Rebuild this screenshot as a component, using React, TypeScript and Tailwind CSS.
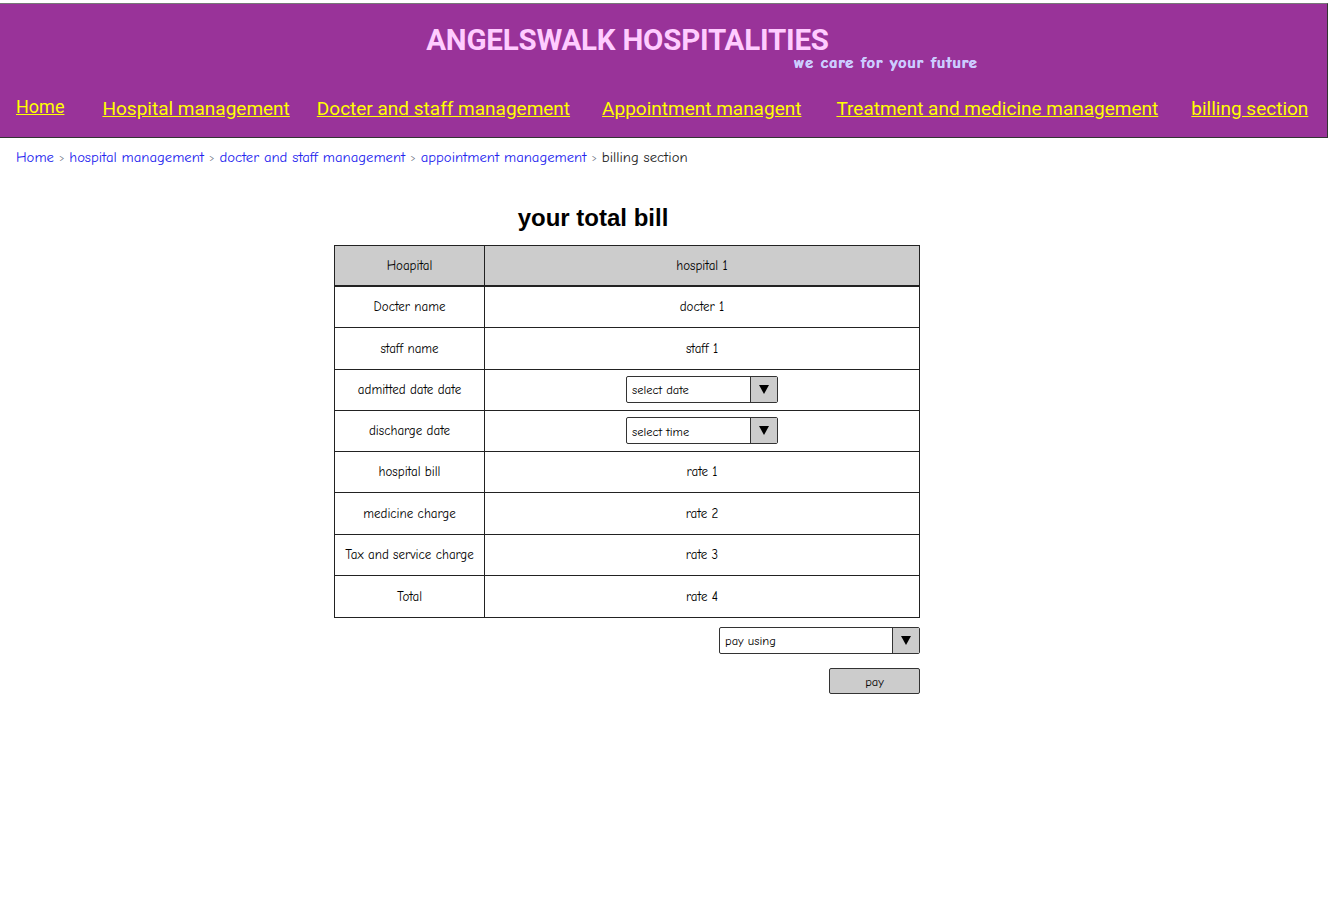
import React from "react";

const hand = { fontFamily: '"Comic Neue", "Comic Sans MS", "Noto Sans", "DejaVu Sans", sans-serif' };
const roboto = { fontFamily: 'Roboto, "Liberation Sans", sans-serif' };

function Select({ label, w }: { label: string; w: string }) {
  return (
    <div className={`flex h-[27px] ${w} border border-[#333] rounded-[2px] bg-white text-[12.5px] text-black`}>
      <div className="flex-1 flex items-center pl-[5px] pt-[2px]">{label}</div>
      <div className="w-[27px] border-l border-[#333] bg-[#cccccc] flex items-center justify-center">
        <svg width="10" height="9" viewBox="0 0 10 9"><path d="M0 0 H10 L5 9 Z" fill="#000" /></svg>
      </div>
    </div>
  );
}

const rows: { k: string; v: React.ReactNode }[] = [
  { k: "Docter name", v: "docter 1" },
  { k: "staff name", v: "staff 1" },
  { k: "admitted date date", v: <Select label="select date" w="w-[152px]" /> },
  { k: "discharge date", v: <Select label="select time" w="w-[152px]" /> },
  { k: "hospital bill", v: "rate 1" },
  { k: "medicine charge", v: "rate 2" },
  { k: "Tax and service charge", v: "rate 3" },
  { k: "Total", v: "rate 4" },
];

export default function App() {
  return (
    <div className="w-[1332px] min-h-[897px] bg-white pt-[3px]">
      <div className="w-[1328px] h-[135px] bg-[#993399] border border-[#333] border-l-0 border-t-[#777] flex flex-col">
        <div className="flex justify-center pt-[19px]">
          <div style={roboto} className="text-[29.5px] leading-[34px] font-bold text-[#ffccff] tracking-[-0.2px] ml-[-72px]">
            ANGELSWALK HOSPITALITIES
          </div>
        </div>
        <div style={hand} className="pl-[794px] text-[16px] leading-[16px] font-bold text-[#ccccff] tracking-[1px] mt-[-2px] [text-shadow:0.6px_0_0_#ccccff,0_0.4px_0_#ccccff]">
          we care for your future
        </div>
        <div style={roboto} className="flex items-end text-[19px] leading-[22px] text-[#ffff00] mt-[25px] pl-[16px]">
          <a className="underline mb-[2px] text-[18px]">Home</a>
          <a className="underline ml-[38px]">Hospital management</a>
          <a className="underline ml-[27px]">Docter and staff management</a>
          <a className="underline ml-[32px]">Appointment managent</a>
          <a className="underline ml-[35px]">Treatment and medicine management</a>
          <a className="underline ml-[33px]">billing section</a>
        </div>
      </div>

      <div style={hand} className="pl-[16px] mt-[11px] text-[14.7px] leading-[18px] flex items-center gap-[5px]">
        <span className="text-[#2222ee]">Home</span>
        <span className="text-gray-500 text-[10px]">&gt;</span>
        <span className="text-[#2222ee]">hospital management</span>
        <span className="text-gray-500 text-[10px]">&gt;</span>
        <span className="text-[#2222ee]">docter and staff management</span>
        <span className="text-gray-500 text-[10px]">&gt;</span>
        <span className="text-[#2222ee]">appointment management</span>
        <span className="text-gray-500 text-[10px]">&gt;</span>
        <span className="text-[#222]">billing section</span>
      </div>

      <div className="flex flex-col items-center">
        <div style={{ fontFamily: '"Liberation Sans", Arial, sans-serif' }} className="text-[24px] font-bold leading-[28px] text-black mt-[37px] ml-[-146px]">
          your total bill
        </div>
        <div style={hand} className="mt-[13px] w-[586px] ml-[-78px] border border-[#222] text-[13px] text-black">
          <div className="flex h-[41px] bg-[#cccccc] border-b-2 border-[#222]">
            <div className="w-[150px] border-r border-[#222] flex items-center justify-center">Hoapital</div>
            <div className="flex-1 flex items-center justify-center">hospital 1</div>
          </div>
          {rows.map((r, i) => (
            <div key={r.k} className={`flex h-[41.25px] ${i < rows.length - 1 ? "border-b border-[#222]" : ""}`}>
              <div className="w-[150px] border-r border-[#222] flex items-center justify-center">{r.k}</div>
              <div className="flex-1 flex items-center justify-center">{r.v}</div>
            </div>
          ))}
        </div>
        <div style={hand} className="w-[586px] ml-[-78px] flex flex-col items-end mt-[9px]">
          <Select label="pay using" w="w-[201px]" />
          <div className="mt-[14px] w-[91px] h-[26px] bg-[#cccccc] border border-[#333] rounded-[2px] flex items-center justify-center text-[12.5px] pt-[2px]">
            pay
          </div>
        </div>
      </div>
    </div>
  );
}
